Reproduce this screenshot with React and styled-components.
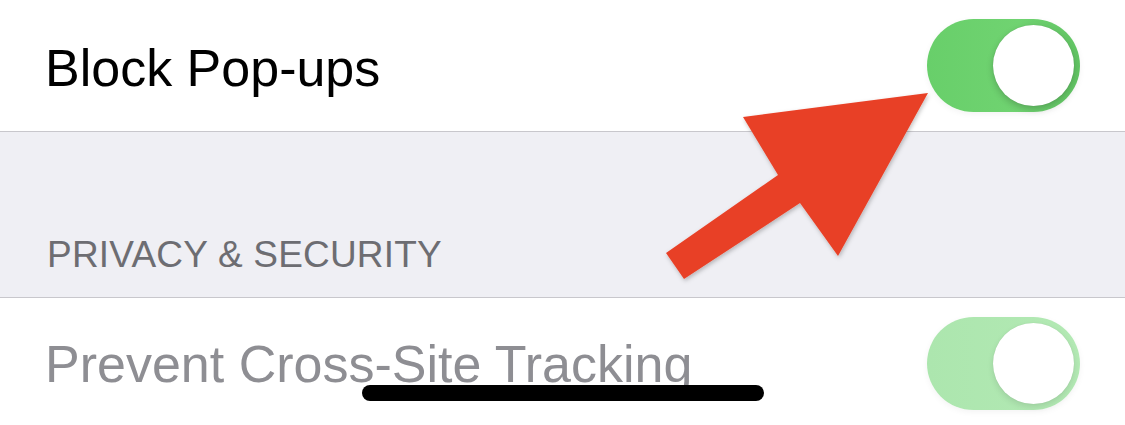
import React from 'react';
import styled, { createGlobalStyle } from 'styled-components';

const GlobalStyle = createGlobalStyle`
  html, body {
    margin: 0;
    padding: 0;
    background: #ffffff;
  }
  body {
    font-family: "Liberation Sans", Arial, sans-serif;
  }
`;

const Screen = styled.div`
  position: relative;
  width: 1125px;
  height: 425px;
  overflow: hidden;
  background: #ffffff;
`;

const Row = styled.div`
  display: flex;
  align-items: center;
  justify-content: space-between;
  height: 131px;
  padding: 0 45px 0 45px;
  background: #ffffff;
  border-bottom: ${({ $last }) => ($last ? 'none' : '1.5px solid #c8c7cc')};
`;

const Label = styled.span`
  font-size: 52px;
  padding-top: ${({ $dim }) => ($dim ? '0' : '4px')};
  color: ${({ $dim }) => ($dim ? '#8e8e93' : '#000000')};
`;

const SectionGap = styled.div`
  display: flex;
  align-items: flex-end;
  height: 166px;
  box-sizing: border-box;
  padding: 0 47px 21px;
  background: #efeff4;
  border-bottom: 1.5px solid #c8c7cc;
`;

const SectionTitle = styled.span`
  font-size: 37px;
  color: #6d6d72;
  letter-spacing: 0.2px;
`;

const Track = styled.div`
  position: relative;
  width: 153px;
  height: 93px;
  border-radius: 47px;
  background: ${({ $dim }) =>
    $dim
      ? 'linear-gradient(90deg, #ace6ae 0%, #b3e9b4 100%)'
      : 'linear-gradient(90deg, #68cf6a 0%, #70d371 60%, #62c564 100%)'};
  box-shadow: 0 2px 6px rgba(0, 0, 0, 0.05);
`;

const Knob = styled.div`
  position: absolute;
  top: 6px;
  right: 6px;
  width: 81px;
  height: 81px;
  border-radius: 50%;
  background: #ffffff;
  box-shadow: ${({ $dim }) =>
    $dim
      ? '0 3px 6px rgba(0, 0, 0, 0.1), 0 0 1px rgba(0, 0, 0, 0.1)'
      : '0 3px 7px rgba(0, 0, 0, 0.2), 0 0 1px rgba(0, 0, 0, 0.15)'};
`;

const HomeBar = styled.div`
  position: absolute;
  left: 362px;
  top: 385px;
  width: 402px;
  height: 16px;
  border-radius: 8px;
  background: #000000;
`;

const ArrowLayer = styled.svg`
  position: absolute;
  left: 0;
  top: 0;
  width: 1125px;
  height: 425px;
  pointer-events: none;
`;

const Toggle = ({ dim }) => (
  <Track $dim={dim}>
    <Knob $dim={dim} />
  </Track>
);

export default function App() {
  return (
    <>
      <GlobalStyle />
      <Screen>
        <Row>
          <Label>Block Pop-ups</Label>
          <Toggle />
        </Row>
        <SectionGap>
          <SectionTitle>PRIVACY &amp; SECURITY</SectionTitle>
        </SectionGap>
        <Row $last>
          <Label $dim>Prevent Cross-Site Tracking</Label>
          <Toggle dim />
        </Row>
        <HomeBar />
        <ArrowLayer viewBox="0 0 1125 425">
          <defs>
            <filter id="arrowShadow" x="-10%" y="-10%" width="130%" height="130%">
              <feDropShadow dx="1" dy="2" stdDeviation="2" floodColor="#000" floodOpacity="0.25" />
            </filter>
          </defs>
          <polygon
            points="928,93 743,117 778,175 666,253 684,279 800,203 838,256"
            fill="#e84127"
            filter="url(#arrowShadow)"
          />
        </ArrowLayer>
      </Screen>
    </>
  );
}
